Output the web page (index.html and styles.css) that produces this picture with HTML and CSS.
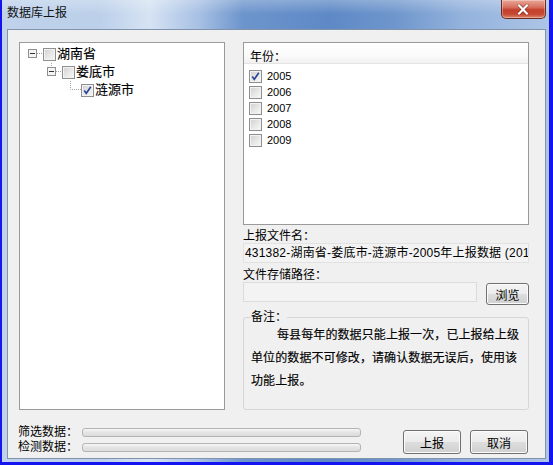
FILE: index.html
```html
<!DOCTYPE html>
<html lang="zh-CN">
<head>
<meta charset="utf-8">
<title>数据库上报</title>
<link rel="stylesheet" href="styles.css">
</head>
<body>
<div class="window">
  <div class="titlebar">
    <span class="title">数据库上报</span>
    <div class="close">
      <svg width="45" height="19" viewBox="0 0 45 19">
        <path d="M18.5 5.5 L26.5 13.5 M26.5 5.5 L18.5 13.5" stroke="#5a1a10" stroke-width="3.6" stroke-linecap="round" fill="none" opacity="0.55"/>
        <path d="M18.5 5.5 L26.5 13.5 M26.5 5.5 L18.5 13.5" stroke="#ffffff" stroke-width="2.2" stroke-linecap="square" fill="none"/>
      </svg>
    </div>
  </div>
  <div class="content">
    <div class="main">
      <div class="tree">
        <div class="node">
          <svg class="toggle" width="19" height="18" viewBox="0 0 19 18">
            <rect x="4.5" y="4.5" width="8" height="8" fill="#f4f4f4" stroke="#8f8f8f"/>
            <path d="M6 8.5 H11" stroke="#333" stroke-width="1"/>
            <path d="M13 8.5 H19" stroke="#a0a0a0" stroke-dasharray="1 1"/>
          </svg>
          <span class="cb"></span>
          <span class="node-label">湖南省</span>
        </div>
        <div class="node lvl1">
          <svg class="toggle" width="19" height="18" viewBox="0 0 19 18">
            <path d="M8.5 0 V4" stroke="#a0a0a0" stroke-dasharray="1 1"/>
            <rect x="4.5" y="4.5" width="8" height="8" fill="#f4f4f4" stroke="#8f8f8f"/>
            <path d="M6 8.5 H11" stroke="#333" stroke-width="1"/>
            <path d="M13 8.5 H19" stroke="#a0a0a0" stroke-dasharray="1 1"/>
          </svg>
          <span class="cb"></span>
          <span class="node-label">娄底市</span>
        </div>
        <div class="node lvl2">
          <svg class="toggle" width="19" height="18" viewBox="0 0 19 18">
            <path d="M8.5 0 V8.5 H19" stroke="#a0a0a0" stroke-dasharray="1 1" fill="none"/>
          </svg>
          <span class="cb checked"><svg width="11" height="11" viewBox="0 0 11 11"><path d="M2.2 5.6 L4.3 8.3 L8.8 1.8" stroke="#2a4496" stroke-width="1.6" fill="none"/></svg></span>
          <span class="node-label">涟源市</span>
        </div>
      </div>
      <div class="side">
        <div class="years">
          <div class="years-head">年份：</div>
          <ul class="year-list">
            <li><span class="cb checked"><svg width="11" height="11" viewBox="0 0 11 11"><path d="M2.2 5.6 L4.3 8.3 L8.8 1.8" stroke="#2a4496" stroke-width="1.6" fill="none"/></svg></span>2005</li>
            <li><span class="cb"></span>2006</li>
            <li><span class="cb"></span>2007</li>
            <li><span class="cb"></span>2008</li>
            <li><span class="cb"></span>2009</li>
          </ul>
        </div>
        <div class="field-label">上报文件名：</div>
        <div class="textbox filename">431382-湖南省-娄底市-涟源市-2005年上报数据 (2010)</div>
        <div class="field-label second">文件存储路径：</div>
        <div class="path-row">
          <div class="textbox path"></div>
          <button class="btn browse">浏览</button>
        </div>
        <fieldset class="memo">
          <legend>备注：</legend>
          <p class="memo-text">每县每年的数据只能上报一次，已上报给上级<br>单位的数据不可修改，请确认数据无误后，使用该<br>功能上报。</p>
        </fieldset>
      </div>
    </div>
    <div class="bottom">
      <div class="progress">
        <span class="prog-label">筛选数据：</span><div class="bar"></div>
        <span class="prog-label">检测数据：</span><div class="bar"></div>
      </div>
      <div class="actions">
        <button class="btn action">上报</button>
        <button class="btn action">取消</button>
      </div>
    </div>
  </div>
</div>
</body>
</html>
```
FILE: styles.css
```css
* { box-sizing: border-box; }
html, body { margin: 0; padding: 0; }
body {
  font-family: "Liberation Sans", "Noto Sans CJK SC", sans-serif;
  font-size: 12px;
  color: #000;
  background: #1414f0;
}
.window {
  width: 553px;
  height: 465px;
  border-left: 2px solid #1414f0;
  border-right: 4px solid #1414f0;
  border-bottom: 3px solid #1414f0;
  padding: 0 3px 3px 5px;
  display: flex;
  flex-direction: column;
  background:
    linear-gradient(180deg, rgba(255,255,255,0.25) 0px, rgba(255,255,255,0) 14px),
    linear-gradient(90deg, #bfd1eb 0%, #bcd0ea 18%, #d6e3f3 27%, #a7c0e4 36%, #6d95cc 44%, #5e89c6 60%, #6f97cd 72%, #93b2dc 84%, #adc5e6 100%);
}
.titlebar {
  height: 29px;
  flex: none;
  display: flex;
  justify-content: space-between;
  align-items: flex-start;
}
.title {
  padding-top: 6px;
  line-height: 14px;
  font-size: 12px;
  color: #111;
}
.close {
  width: 45px;
  height: 19px;
  border: 1px solid #6e2a22;
  border-top: none;
  border-radius: 0 0 5px 5px;
  background: linear-gradient(180deg, #e9a899 0%, #d7715f 40%, #c2402c 55%, #c84a34 80%, #dd8a6f 100%);
  box-shadow: inset 0 0 0 1px rgba(255,255,255,0.3);
  display: flex;
}
.close svg { display: block; margin-left: -1px; }
.content {
  flex: 1;
  background: #f0f0f0;
  border: 1px solid #8193ab;
  padding: 12px 16px 0 11px;
  display: flex;
  flex-direction: column;
}
.main {
  display: flex;
  gap: 18px;
  height: 368px;
}
.tree {
  width: 206px;
  background: #fff;
  border: 1px solid #9a9a9a;
  padding: 2px 0 0 4px;
}
.node {
  height: 18px;
  display: flex;
  align-items: center;
  font-size: 13px;
}
.node.lvl1 { padding-left: 19px; }
.node.lvl2 { padding-left: 38px; }
.toggle { display: block; flex: none; }
.node-label {
  margin-left: 1px;
  line-height: 18px;
  -webkit-text-stroke: 0.15px #000;
}
.cb {
  display: inline-block;
  flex: none;
  width: 13px;
  height: 13px;
  border: 1px solid #8e8f8f;
  background: linear-gradient(135deg, #cfcfcf 0%, #e6e6e6 50%, #f7f7f7 100%);
  box-shadow: inset 0 0 0 1px #f2f2f2;
  position: relative;
}
.cb.checked svg { display: block; position: absolute; left: 0; top: 0; }
.side {
  width: 286px;
  display: flex;
  flex-direction: column;
}
.years {
  height: 183px;
  flex: none;
  background: #fff;
  border: 1px solid #9a9a9a;
}
.years-head {
  height: 21px;
  padding: 7px 0 0 6px;
  line-height: 14px;
  background: linear-gradient(180deg, #ffffff 0%, #fbfbfb 60%, #f1f1f1 100%);
  border-bottom: 1px solid #e3e3e3;
}
.year-list {
  list-style: none;
  margin: 0;
  padding: 4px 0 0 5px;
}
.year-list li {
  height: 16px;
  display: flex;
  align-items: center;
  gap: 5px;
  font-size: 11px;
}
.field-label {
  margin-top: 5px;
  height: 13px;
  line-height: 13px;
}
.field-label.second { margin-top: 6px; }
.textbox {
  height: 20px;
  border: 1px solid #e2e2e2;
  background: #f3f3f3;
}
.filename {
  padding-left: 1px;
  line-height: 19px;
  white-space: nowrap;
  overflow: hidden;
  font-size: 12px;
  letter-spacing: 0.2px;
}
.path-row {
  display: flex;
  gap: 9px;
  align-items: flex-start;
  height: 22px;
}
.path { width: 234px; height: 20px; border-color: #dcdcdc; }
.btn {
  font-family: "Liberation Sans", "Noto Sans CJK SC", sans-serif;
  font-size: 12px;
  color: #000;
  padding: 0;
  border: 1px solid #707070;
  border-radius: 3px;
  background: linear-gradient(180deg, #f4f4f4 0%, #ececec 48%, #dddddd 52%, #d0d0d0 100%);
  box-shadow: inset 0 0 0 1px #fbfbfb;
}
.browse { width: 43px; height: 22px; margin-top: 1px; }
.memo {
  flex: 1;
  margin: 6px 0 0 0;
  padding: 0 6px 0 7px;
  border: 1px solid #d6d6d6;
  border-radius: 3px;
  min-width: 0;
}
.memo legend {
  padding: 0;
  line-height: 14px;
}
.memo-text {
  margin: 0;
  line-height: 23px;
  font-size: 12px;
  text-indent: 26px;
  white-space: nowrap;
  letter-spacing: 0.1px;
  -webkit-text-stroke: 0.15px #000;
}
.bottom {
  margin-top: 15px;
  display: flex;
  align-items: flex-start;
}
.progress {
  display: grid;
  grid-template-columns: 63px 279px;
  grid-auto-rows: 15px;
  align-items: center;
}
.prog-label { line-height: 15px; margin-left: -1px; }
.bar {
  height: 9px;
  border: 1px solid #b4b4b4;
  border-radius: 3px;
  background: linear-gradient(180deg, #f6f6f6 0%, #e4e4e4 50%, #dcdcdc 100%);
}
.actions {
  margin-left: auto;
  margin-right: 1px;
  margin-top: 5px;
  display: flex;
  gap: 9px;
}
.action { width: 58px; height: 24px; }
```
